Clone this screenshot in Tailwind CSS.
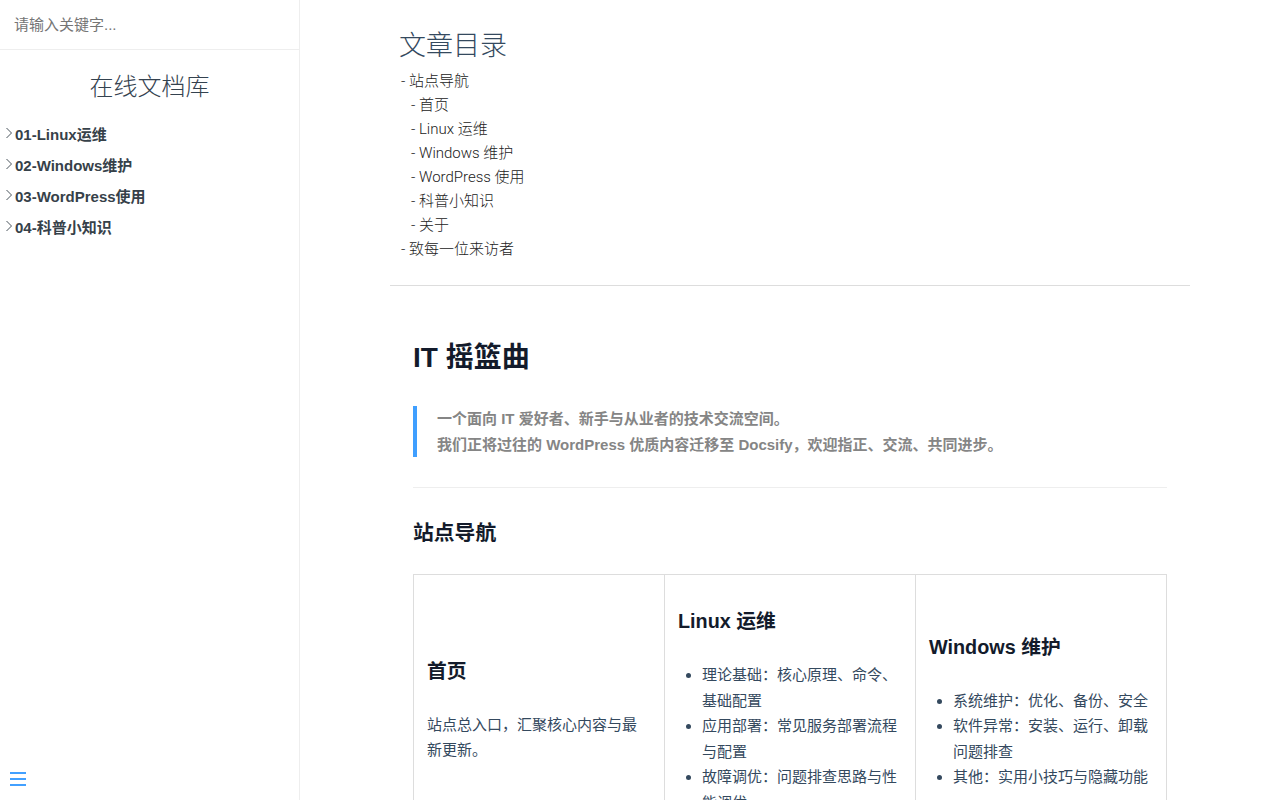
<!DOCTYPE html>
<html lang="zh-CN">
  <head>
    <meta charset="UTF-8" />
    <meta name="viewport" content="width=device-width, initial-scale=1.0" />
    <title>IT 摇篮曲</title>
    <script src="https://cdn.jsdelivr.net/npm/@tailwindcss/browser@4"></script>
  </head>

  <body class="bg-white font-['Liberation_Sans','Noto_Sans_CJK_SC',sans-serif] text-[15px] text-[#34495e]">
    <div class="flex h-screen overflow-hidden">
      <!-- Sidebar -->
      <aside class="w-[300px] shrink-0 border-r border-[#eeeeee]">
        <div class="h-[50px] border-b border-[#eeeeee]">
          <input
            type="text"
            placeholder="请输入关键字..."
            class="w-full h-[49px] px-[14px] text-[15px] outline-none placeholder:text-[#757575]"
          />
        </div>
        <h1 class="mt-[19px] text-center text-2xl leading-[36px] font-light text-[#34424f]">在线文档库</h1>
        <ul class="mt-[14px] font-bold text-[#364149] leading-[31px]">
          <li class="flex items-center pl-[5px]">
            <svg class="w-[7px] h-[12px] mr-[3px] -mt-[3px]" viewBox="0 0 7 12" fill="none" stroke="#364149" stroke-width="0.9"><path d="M1.5 1l5 5-5 5" /></svg>
            01-Linux运维
          </li>
          <li class="flex items-center pl-[5px]">
            <svg class="w-[7px] h-[12px] mr-[3px] -mt-[3px]" viewBox="0 0 7 12" fill="none" stroke="#364149" stroke-width="0.9"><path d="M1.5 1l5 5-5 5" /></svg>
            02-Windows维护
          </li>
          <li class="flex items-center pl-[5px]">
            <svg class="w-[7px] h-[12px] mr-[3px] -mt-[3px]" viewBox="0 0 7 12" fill="none" stroke="#364149" stroke-width="0.9"><path d="M1.5 1l5 5-5 5" /></svg>
            03-WordPress使用
          </li>
          <li class="flex items-center pl-[5px]">
            <svg class="w-[7px] h-[12px] mr-[3px] -mt-[3px]" viewBox="0 0 7 12" fill="none" stroke="#364149" stroke-width="0.9"><path d="M1.5 1l5 5-5 5" /></svg>
            04-科普小知识
          </li>
        </ul>
      </aside>

      <!-- Content -->
      <main class="flex-1 min-w-0">
        <div class="w-[800px] ml-[90px]">
          <div class="px-[10px] pt-[26px] pb-[24px] border-b border-[#dddddd]">
            <h2 class="-ml-[1px] text-[27px] leading-[40px] font-light text-[#34495e]">文章目录</h2>
            <ul class="mt-[3px] leading-[24px] font-['Roboto','Noto_Sans_CJK_SC',sans-serif] font-light text-[#222222]">
              <li class="pl-[1px]">- 站点导航</li>
              <li class="pl-[11px]">- 首页</li>
              <li class="pl-[11px]">- Linux 运维</li>
              <li class="pl-[11px]">- Windows 维护</li>
              <li class="pl-[11px]">- WordPress 使用</li>
              <li class="pl-[11px]">- 科普小知识</li>
              <li class="pl-[11px]">- 关于</li>
              <li class="pl-[1px]">- 致每一位来访者</li>
            </ul>
          </div>

          <article class="px-[23px]">
            <h1 class="mt-[51px] text-[28px] leading-[42px] font-bold text-[#131b2b]">IT 摇篮曲</h1>
            <blockquote class="mt-[27px] border-l-4 border-[#3f9fff] pl-[20px] font-bold text-[#858585] leading-[25.5px]">
              一个面向 IT 爱好者、新手与从业者的技术交流空间。<br />
              我们正将过往的 WordPress 优质内容迁移至 Docsify，欢迎指正、交流、共同进步。
            </blockquote>
            <hr class="mt-[30px] border-[#eeeeee]" />
            <h2 class="mt-[30px] text-[20.8px] leading-[30px] font-bold text-[#131b2b]">站点导航</h2>

            <table class="mt-[26px] w-[754px] table-fixed border-collapse">
              <tbody>
                <tr>
                  <td class="border border-[#dddddd] px-[13px] py-[6px] align-middle">
                    <h3 class="mt-[24px] text-[19.8px] leading-[30px] font-bold text-[#131b2b]">首页</h3>
                    <p class="mt-[25.4px] mb-[24px] leading-[25.5px]">站点总入口，汇聚核心内容与最新更新。</p>
                  </td>
                  <td class="border border-[#dddddd] px-[13px] py-[6px] align-middle">
                    <h3 class="mt-[25px] text-[19.8px] leading-[30px] font-bold text-[#131b2b]">Linux 运维</h3>
                    <ul class="mt-[26px] mb-[23px] pl-[24px] list-disc leading-[25.5px]">
                      <li>理论基础：核心原理、命令、基础配置</li>
                      <li>应用部署：常见服务部署流程与配置</li>
                      <li>故障调优：问题排查思路与性能调优</li>
                    </ul>
                  </td>
                  <td class="border border-[#dddddd] px-[13px] py-[6px] align-middle">
                    <h3 class="mt-[25px] text-[19.8px] leading-[30px] font-bold text-[#131b2b]">Windows 维护</h3>
                    <ul class="mt-[26px] mb-[23px] pl-[24px] list-disc leading-[25.5px]">
                      <li>系统维护：优化、备份、安全</li>
                      <li>软件异常：安装、运行、卸载问题排查</li>
                      <li>其他：实用小技巧与隐藏功能</li>
                    </ul>
                  </td>
                </tr>
              </tbody>
            </table>
          </article>
        </div>
      </main>
    </div>

    <!-- Sidebar toggle -->
    <button class="absolute left-[10px] bottom-[14px] flex flex-col gap-[4px] w-[16px]">
      <span class="block h-[2px] bg-[#42a0ff]"></span>
      <span class="block h-[2px] bg-[#42a0ff]"></span>
      <span class="block h-[2px] bg-[#42a0ff]"></span>
    </button>
  </body>
</html>
